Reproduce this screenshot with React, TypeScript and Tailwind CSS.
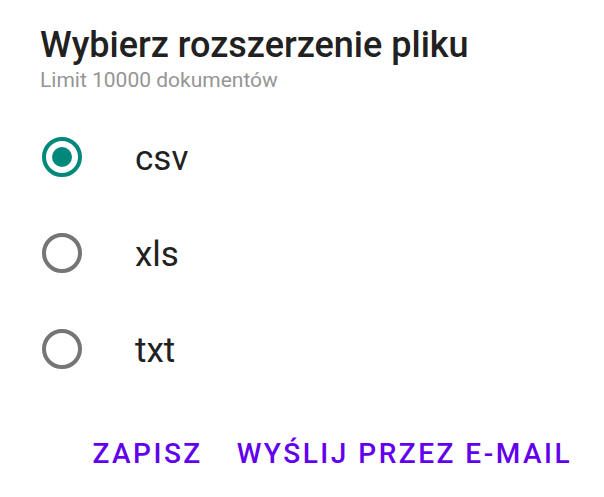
import { useState } from "react";

const options = ["csv", "xls", "txt"];

function Radio({ checked }: { checked: boolean }) {
  return (
    <span
      className={`flex h-[40px] w-[40px] shrink-0 items-center justify-center rounded-full border-[4px] ${
        checked ? "border-[#00897b]" : "border-[#757575]"
      }`}
    >
      {checked && <span className="h-[20px] w-[20px] rounded-full bg-[#00897b]" />}
    </span>
  );
}

export default function App() {
  const [selected, setSelected] = useState("csv");

  return (
    <div className="h-[497px] w-[604px] bg-white font-['Roboto',sans-serif]">
      {/* header */}
      <div className="px-[40px] pt-[23px]">
        <h1 className="text-[36px] font-medium leading-[44px] text-[#212121]">Wybierz rozszerzenie pliku</h1>
        <p className="mt-px text-[21px] leading-[24px] text-[#959595]">Limit 10000 dokumentów</p>
      </div>

      {/* options */}
      <div className="mt-[17px] flex flex-col pl-[42px]">
        {options.map((opt) => (
          <button
            key={opt}
            onClick={() => setSelected(opt)}
            className="flex h-[96px] items-center gap-[53px] text-left"
          >
            <Radio checked={selected === opt} />
            <span className="mt-[4px] text-[35px] leading-[40px] text-[#212121]">{opt}</span>
          </button>
        ))}
      </div>

      {/* actions */}
      <div className="mt-[39px] flex justify-end gap-[2px] pr-[16px]">
        <button className="px-4 text-[28px] font-medium uppercase leading-[36px] tracking-[2.5px] text-[#6200ee]">
          Zapisz
        </button>
        <button className="px-4 text-[28px] font-medium uppercase leading-[36px] tracking-[2.5px] text-[#6200ee]">
          Wyślij przez e-mail
        </button>
      </div>
    </div>
  );
}
